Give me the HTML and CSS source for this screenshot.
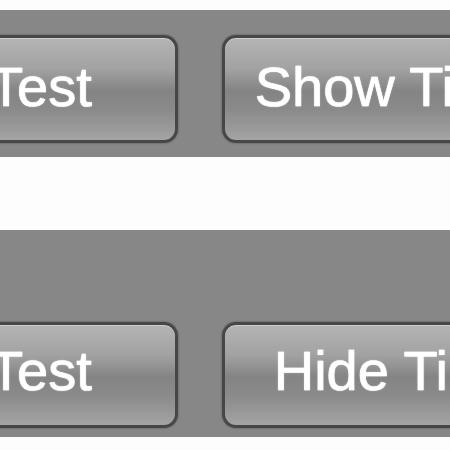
FILE: index.html
```html
<!DOCTYPE html>
<html>
<head>
    <title>Tips toolbar</title>
    <link rel="stylesheet" href="styles.css">
</head>
<body>

    <div class="strip strip-show">
        <button class="btn btn-test">Test</button>
        <button class="btn btn-tips">Show Tips</button>
    </div>

    <div class="strip strip-hide">
        <button class="btn btn-test">Test</button>
        <button class="btn btn-tips btn-hide">Hide Tips</button>
    </div>

</body>
</html>
```

FILE: styles.css
```css
body {
    margin: 0;
    background: #fdfdfd;
    font-family: "Liberation Sans", Arial, sans-serif;
    overflow: hidden;
}

.strip {
    display: flex;
    align-items: flex-end;
    gap: 44px;
    background: #878787;
    box-sizing: border-box;
    overflow: hidden;
}
.strip-show {
    margin-top: 10px;
    height: 147px;
    padding-bottom: 14px;
}
.strip-hide {
    margin-top: 73px;
    height: 207px;
    padding-bottom: 9px;
}

.btn {
    flex-shrink: 0;
    display: flex;
    align-items: center;
    box-sizing: border-box;
    height: 108px;
    padding: 0 30px 5px 30px;
    border: 3px solid #474747;
    border-radius: 14px;
    background: linear-gradient(to bottom, #b4b4b4 0%, #a2a2a2 30%, #848484 52%, #8a8a8a 70%, #a4a4a4 100%);
    box-shadow: 0 0 2px rgba(0, 0, 0, 0.45), inset 0 1px 0 rgba(255, 255, 255, 0.35);
    color: #fff;
    font-family: inherit;
    font-size: 56px;
    white-space: nowrap;
    -webkit-text-stroke: 0.7px #fff;
    text-shadow: 0 0 2px rgba(255, 255, 255, 0.6);
    cursor: pointer;
}
.strip-hide .btn {
    height: 106px;
    padding-bottom: 10px;
}

.btn-test {
    margin-left: -44px;
    padding-right: 83px;
}
.btn-hide {
    padding-left: 49px;
}
```
